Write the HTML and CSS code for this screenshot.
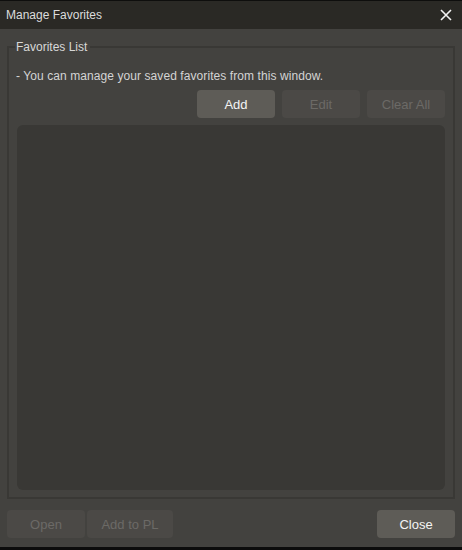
FILE: index.html
```html
<!DOCTYPE html>
<html>
<head>
<meta charset="utf-8">
<link rel="stylesheet" href="styles.css">
</head>
<body>
<div class="window">
  <div class="titlebar">
    <span class="title">Manage Favorites</span>
    <svg class="close-x" width="12" height="12" viewBox="0 0 12 12"><path d="M1 1 L11 11 M11 1 L1 11" stroke="#f2f2f2" stroke-width="1.6" fill="none"/></svg>
  </div>
  <div class="main">
    <div class="group">
      <span class="legend">Favorites List</span>
      <div class="desc">- You can manage your saved favorites from this window.</div>
      <div class="toolbar">
        <button class="btn">Add</button>
        <button class="btn disabled">Edit</button>
        <button class="btn disabled">Clear All</button>
      </div>
      <div class="list"></div>
    </div>
  </div>
  <div class="footer">
    <button class="btn disabled">Open</button>
    <button class="btn disabled wide">Add to PL</button>
    <span class="spacer"></span>
    <button class="btn">Close</button>
  </div>
</div>
</body>
</html>
```
FILE: styles.css
```css
html, body {
  margin: 0;
  padding: 0;
  background: #43423f;
}
.window {
  width: 462px;
  height: 550px;
  display: flex;
  flex-direction: column;
  background: #43423f;
  font-family: "Liberation Sans", Arial, sans-serif;
  font-size: 12px;
  color: #d8d8d8;
  box-sizing: border-box;
  border-bottom: 3px solid #0c0c0c;
}
.titlebar {
  height: 29px;
  box-sizing: border-box;
  border-top: 1px solid #0e0e0d;
  background: #2a2925;
  display: flex;
  align-items: center;
  justify-content: space-between;
  padding: 0 10px 0 6px;
}
.title {
  color: #dcdcdc;
  font-size: 12px;
}
.close-x {
  display: block;
}
.main {
  flex: 1;
  display: flex;
  flex-direction: column;
  padding: 17px 7px 0;
}
.group {
  flex: 1;
  position: relative;
  border: 2px solid #393835;
  display: flex;
  flex-direction: column;
  padding: 20px 8px 7px 8px;
}
.legend {
  position: absolute;
  top: -9px;
  left: 6px;
  padding: 0 3px 0 1px;
  background: #43423f;
  line-height: 16px;
  color: #d8d8d8;
}
.desc {
  line-height: 16px;
  height: 16px;
  margin-left: -1px;
  letter-spacing: 0.08px;
  color: #d4d4d4;
}
.toolbar {
  display: flex;
  justify-content: flex-end;
  gap: 7px;
  margin-top: 6px;
}
.btn {
  width: 78px;
  height: 28px;
  border: none;
  border-radius: 4px;
  background: #5e5c57;
  color: #f4f4f4;
  font-family: "Liberation Sans", Arial, sans-serif;
  font-size: 13px;
  padding: 0;
}
.btn.disabled {
  background: #4b4946;
  color: #6c6a66;
}
.btn.wide {
  width: 86px;
}
.list {
  flex: 1;
  margin-top: 7px;
  background: #393835;
  border-radius: 6px;
}
.footer {
  display: flex;
  gap: 2px;
  padding: 11px 7px 9px;
}
.spacer {
  flex: 1;
}
```
